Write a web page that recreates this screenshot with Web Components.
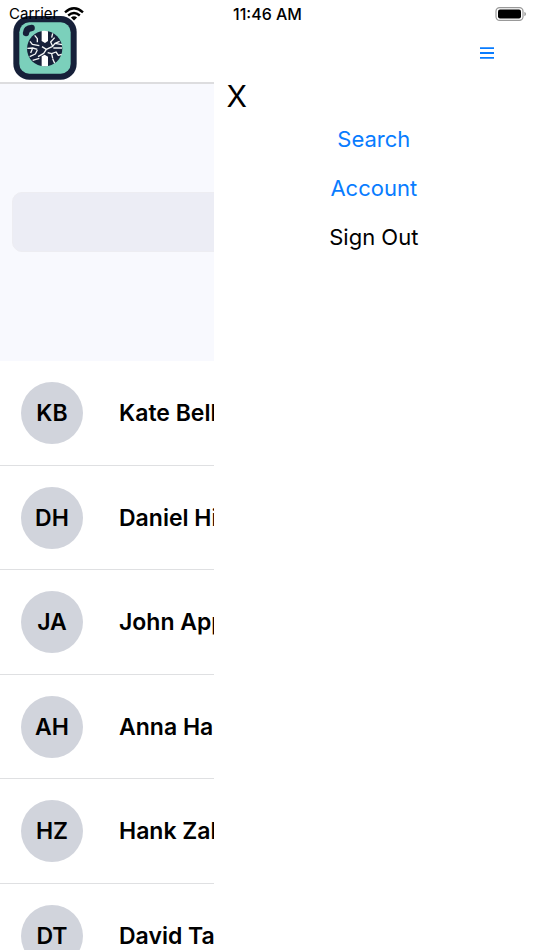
<!DOCTYPE html>
<html lang="en">
<head>
<meta charset="utf-8">
<meta name="viewport" content="width=device-width, initial-scale=1">
<title>Contacts</title>
<style>
  html, body { height: 100%; margin: 0; }
  body { font-family: Inter, "Liberation Sans", sans-serif; color: #000; background: #fff; overflow: hidden; }
</style>
</head>
<body>
<app-shell>
  <status-bar slot="status" carrier="Carrier" time="11:46 AM"></status-bar>
  <app-header slot="header"></app-header>
  <search-panel></search-panel>
  <contact-list>
    <contact-row initials="KB">Kate Bell</contact-row>
    <contact-row initials="DH">Daniel Higgins</contact-row>
    <contact-row initials="JA">John Appleseed</contact-row>
    <contact-row initials="AH">Anna Haro</contact-row>
    <contact-row initials="HZ">Hank Zakroff</contact-row>
    <contact-row initials="DT">David Taylor</contact-row>
  </contact-list>
  <nav-drawer slot="drawer">
    <a href="#search">Search</a>
    <a href="#account">Account</a>
    <button type="button">Sign Out</button>
  </nav-drawer>
</app-shell>
<script>
const define = (name, html, setup) => {
  const template = document.createElement('template');
  template.innerHTML = html;
  customElements.define(name, class extends HTMLElement {
    constructor() {
      super();
      this.attachShadow({ mode: 'open' }).append(template.content.cloneNode(true));
    }
    connectedCallback() { if (setup) setup(this, this.shadowRoot); }
  });
};

define('app-shell', `
  <style>
    :host { display: flex; flex-direction: column; position: relative; height: 100%; overflow: hidden; }
    main { border-top: 2px solid #dddddf; flex: 1; min-height: 0; overflow: hidden; }
    slot[name=header]::slotted(*) { position: relative; z-index: 2; }
    slot[name=status]::slotted(*) { position: absolute; inset: 0 0 auto; z-index: 3; }
    slot[name=drawer]::slotted(*) { position: absolute; inset: 0 0 0 40%; z-index: 1; }
  </style>
  <slot name="status"></slot>
  <slot name="header"></slot>
  <main><slot></slot></main>
  <slot name="drawer"></slot>`);

define('status-bar', `
  <style>
    :host { display: grid; grid-template-columns: 1fr auto 1fr; align-items: center; height: 28px;
            padding: 0 8px 0 9px; box-sizing: border-box; font-size: 15px; line-height: 20px; pointer-events: none; }
    .left { display: flex; align-items: center; gap: 6px; }
    .time { font-size: 16px; font-weight: 500; }
    .battery { justify-self: end; }
    svg { display: block; }
  </style>
  <div class="left"><span class="carrier"></span>
    <svg width="20" height="14" viewBox="0 0 20 14" fill="none" stroke="#000" stroke-width="2.4" aria-hidden="true">
      <path d="M1 5.3Q10-2.7 19 5.3M4.2 8.5Q10 3.5 15.8 8.5"/>
      <path d="M10 13.6L6.9 10.5Q10 8.2 13.1 10.5Z" fill="#000" stroke="none"/>
    </svg></div>
  <span class="time"></span>
  <svg class="battery" width="31" height="14" viewBox="0 0 31 14" aria-hidden="true">
    <rect x="1" y=".6" width="27" height="12.8" rx="3.6" fill="#fff" stroke="#999" stroke-width="1.2"/>
    <rect x="3" y="2.4" width="23" height="9.2" rx="2" fill="#000"/>
    <path d="M29.4 4.8Q31 5.6 31 7T29.4 9.2Z" fill="#999"/>
  </svg>`, (el, root) => {
  root.querySelector('.carrier').textContent = el.getAttribute('carrier');
  root.querySelector('.time').textContent = el.getAttribute('time');
});

define('tire-logo', `
  <style>:host { display: block; } svg { display: block; width: 64px; height: 64px; }</style>
  <svg viewBox="11 12 192 192" role="img" aria-label="Home">
    <rect x="12" y="12" width="190" height="191" rx="48" fill="#162039"/>
    <rect x="30" y="31" width="154" height="154" rx="30" fill="#7bd0bb"/>
    <path d="M50 63Q51 49 67 48" fill="none" stroke="#162039" stroke-width="19" stroke-linecap="round"/>
    <circle cx="106" cy="110" r="53" fill="#162039"/>
    <path d="M97 57Q106 55 116 58V87L107 93L97 87ZM97 133L106 128L116 134V162Q106 164 97 162Z" fill="#fff"/>
    <g fill="none" stroke="#f5f7f6" stroke-width="4" stroke-linejoin="round">
      <path d="M76 70L84 80V91M62 88L69 97L90 101M54 109L70 108L64 123M70 108L84 112M61 134L78 126L84 114M70 145L90 139M86 134L103 124L111 112L98 104"/>
      <path d="M111 112L130 103L137 94L151 88M130 103L124 90L136 77M130 64L127 77M137 94L158 98M132 108L158 108M115 122L127 125L130 139M127 125L140 120L147 130L157 127M130 140L136 154"/>
    </g>
  </svg>`);

define('app-header', `
  <style>
    :host { display: flex; justify-content: space-between; align-items: flex-start; height: 82px;
            box-sizing: border-box; padding: 16px 32px 0 13px; }
    button { display: grid; place-items: center; width: 30px; height: 30px; margin-top: 22px; padding: 0; border: 0; background: none; cursor: pointer; }
    svg { display: block; }
  </style>
  <tire-logo></tire-logo>
  <button type="button" aria-label="Menu">
    <svg width="14" height="12" viewBox="0 0 14 12" stroke="#087cff" stroke-width="1.8" aria-hidden="true"><path d="M0 1.2H14M0 6H14M0 10.8H14"/></svg>
  </button>`);

define('search-panel', `
  <style>
    :host { display: flex; align-items: center; height: 277px; box-sizing: border-box; padding: 0 12px 2px; background: #f8f9fe; }
    input { flex: 1; min-width: 0; height: 60px; box-sizing: border-box; padding: 0 16px; border: 1px solid #ededf2;
            border-radius: 10px; background: #ecedf5; font: inherit; font-size: 24px; }
  </style>
  <input type="search" aria-label="Search contacts">`);

define('contact-list', `
  <style>
    :host { display: block; }
    ::slotted(*) { min-height: 105px; }
    ::slotted(:nth-child(even)) { min-height: 104px; }
  </style>
  <slot></slot>`);

define('contact-row', `
  <style>
    :host { display: flex; align-items: center; gap: 36px; box-sizing: border-box; padding: 0 21px;
            border-bottom: 1px solid #dfe0e2; font-size: 23px; line-height: 28px; font-weight: 600; white-space: nowrap; }
    .avatar { display: grid; place-items: center; flex: none; width: 62px; height: 62px; border-radius: 50%; background: #d1d4dc; }
  </style>
  <span class="avatar"></span><span><slot></slot></span>`, (el, root) => {
  root.querySelector('.avatar').textContent = el.getAttribute('initials');
});

define('nav-drawer', `
  <style>
    :host { display: flex; flex-direction: column; background: #fff; padding-top: 78px; }
    .close { align-self: flex-start; margin-left: 13px; padding: 0; border: 0; background: none; color: inherit;
             font: inherit; font-size: 30px; line-height: 37px; cursor: pointer; }
    nav { display: flex; flex-direction: column; align-items: center; gap: 21px; padding-top: 10px; }
    ::slotted(*) { padding: 0; border: 0; background: none; font: inherit; font-size: 22px; line-height: 28px; color: #000; text-decoration: none; cursor: pointer; }
    ::slotted(a) { color: #087cff; }
  </style>
  <button class="close" type="button" aria-label="Close menu">X</button>
  <nav><slot></slot></nav>`);
</script>
</body>
</html>
